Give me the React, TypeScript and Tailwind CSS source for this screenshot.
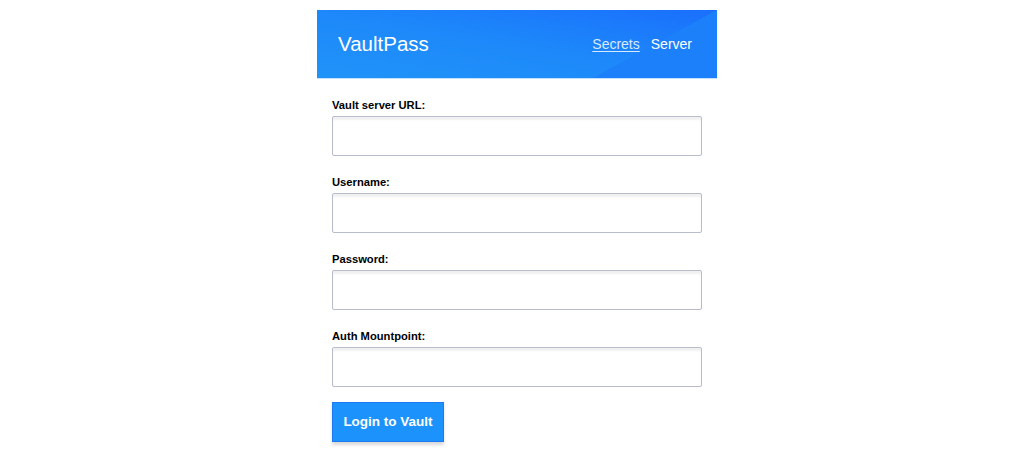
import React from "react";

const fields = ["Vault server URL:", "Username:", "Password:", "Auth Mountpoint:"];

export default function App() {
  return (
    <div className="min-h-screen bg-white pl-[10px] pt-[10px] font-['Liberation_Sans',Arial,sans-serif]">
      <div className="mx-auto w-[400px]">
        {/* Header */}
        <header className="relative h-[69px] overflow-hidden border-b border-[#c3e0fd] bg-[linear-gradient(to_top_right,#2093f8_0%,#1d88fa_50%,#1a6ffc_100%)]">
          <div className="absolute bottom-0 right-0 h-full w-[124px] bg-[linear-gradient(to_top_left,#1c80fb_50%,transparent_50%)]" />
          <div className="relative flex h-full items-center justify-between pl-[21px] pr-[25px]">
            <h1 className="text-[20.5px] font-light text-white">VaultPass</h1>
            <nav className="flex items-center gap-[11px] text-[14px]">
              <a href="#" className="text-[#d8eaff] underline underline-offset-2">
                Secrets
              </a>
              <a href="#" className="text-white">
                Server
              </a>
            </nav>
          </div>
        </header>

        {/* Form */}
        <form className="px-[15px] pt-[19px]">
          {fields.map((label) => (
            <div key={label} className="mb-[19px]">
              <label className="mb-[3px] block text-[11.2px] font-bold leading-[15px] text-black">
                {label}
              </label>
              <input
                type={label === "Password:" ? "password" : "text"}
                className="block h-[40px] w-[370px] rounded-[2px] border border-[#b9bccb] bg-white shadow-[inset_0_3px_2px_rgba(0,0,0,0.06)] outline-none"
              />
            </div>
          ))}
          <button
            type="button"
            className="-mt-[4px] h-[40px] w-[112px] border border-[#1d7bf0] bg-[#1c93fc] text-[13.5px] font-bold text-white shadow-[0_3px_3px_rgba(0,0,0,0.15)]"
          >
            Login to Vault
          </button>
        </form>
      </div>
    </div>
  );
}
